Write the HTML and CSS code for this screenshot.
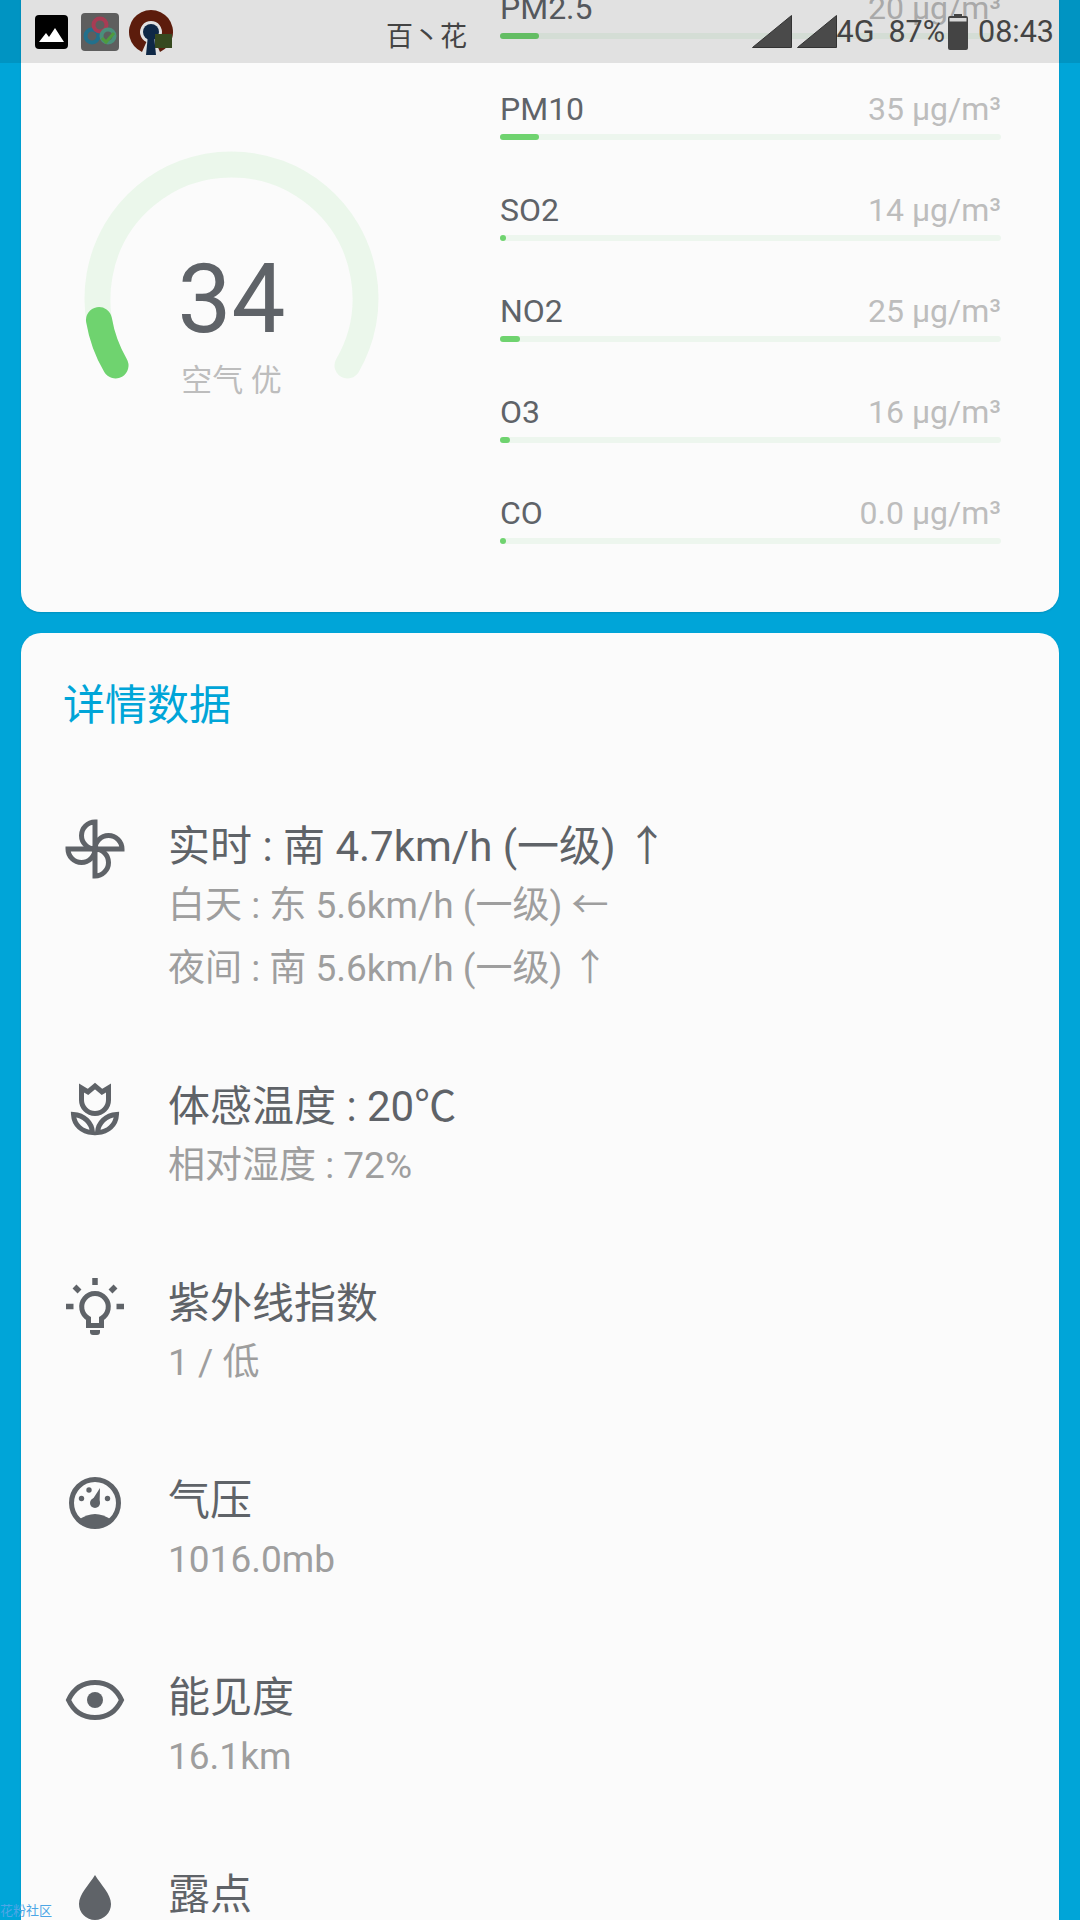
FILE: index.html
```html
<!DOCTYPE html>
<html>

<head>
    <meta charset="utf-8">
    <link rel="stylesheet" href="styles.css">
</head>

<body>
    <div id="statusbar">
        <div class="notify-icons">
            <svg class="ic-image" viewBox="0 0 33 34">
                <rect width="33" height="34" rx="4" fill="#000" />
                <path d="M4 27 L11 18 L14 22 L20 13 L29 27 Z" fill="#fff" />
            </svg>
            <svg class="ic-cloud" viewBox="0 0 38 38">
                <rect width="38" height="38" rx="4" fill="#5e5e5e" />
                <circle cx="11" cy="23" r="6.5" fill="none" stroke="#22708c" stroke-width="4" />
                <circle cx="19" cy="12" r="6.5" fill="none" stroke="#a83c54" stroke-width="4" />
                <circle cx="27" cy="23" r="6.5" fill="none" stroke="#4a8f7c" stroke-width="4" />
                <path d="M21 25 L25 29 L33 20" fill="none" stroke="#4f9a3e" stroke-width="3" />
            </svg>
            <svg class="ic-vpn" viewBox="0 0 46 46">
                <path d="M14 43 A22 22 0 1 1 32 43 L27.6 33 A11 11 0 1 0 18.4 33 Z" fill="#5c1c0c" />
                <circle cx="23" cy="23" r="8" fill="#0e2846" />
                <path d="M20 26 H26 L28 46 H18 Z" fill="#0e2846" />
                <rect x="27" y="25" width="17" height="14" fill="#36491f" />
            </svg>
        </div>
        <div class="carrier">百丶花</div>
        <div class="sys-icons">
            <svg class="ic-signal" viewBox="0 0 40 33">
                <path d="M0.5 32.5 L39.5 0.5 V32.5 Z" fill="#4a4a4a" stroke="#333" />
            </svg>
            <svg class="ic-signal" viewBox="0 0 40 33">
                <path d="M0.5 32.5 L39.5 0.5 V32.5 Z" fill="#4a4a4a" stroke="#333" />
            </svg>
            <span class="net">4G</span>
            <span class="batt-text">87%</span>
            <svg class="ic-batt" viewBox="0 0 20 36">
                <path d="M6 0 H14 V2 H18 Q20 2 20 4 V34 Q20 36 18 36 H2 Q0 36 0 34 V4 Q0 2 2 2 H6 Z" fill="#444" />
                <rect x="1.5" y="4" width="17" height="3.5" fill="#d8d8d8" />
            </svg>
            <span class="clock">08:43</span>
        </div>
    </div>

    <div id="page">
        <div class="card aqi-card">
            <div class="gauge">
                <svg class="gauge-arc" viewBox="0 0 295 295">
                    <!-- 240 degree sweep, r = 134 -->
                    <path d="M31.5 214.5 A134 134 0 1 1 263.5 214.5" fill="none" stroke="#ebf7eb" stroke-width="26"
                        stroke-linecap="round" />
                    <path d="M31.5 214.5 A134 134 0 0 1 15 169" fill="none" stroke="#6fd36f" stroke-width="26"
                        stroke-linecap="round" />
                </svg>
                <div class="gauge-num">34</div>
                <div class="gauge-label">空气 优</div>
            </div>

            <div class="pollutants">
                <div class="poll">
                    <div class="poll-head"><span>PM2.5</span><span class="poll-val">20 μg/m³</span></div>
                    <div class="track"><div class="fill" style="width: 39px"></div></div>
                </div>
                <div class="poll">
                    <div class="poll-head"><span>PM10</span><span class="poll-val">35 μg/m³</span></div>
                    <div class="track"><div class="fill" style="width: 39px"></div></div>
                </div>
                <div class="poll">
                    <div class="poll-head"><span>SO2</span><span class="poll-val">14 μg/m³</span></div>
                    <div class="track"><div class="fill" style="width: 6px"></div></div>
                </div>
                <div class="poll">
                    <div class="poll-head"><span>NO2</span><span class="poll-val">25 μg/m³</span></div>
                    <div class="track"><div class="fill" style="width: 20px"></div></div>
                </div>
                <div class="poll">
                    <div class="poll-head"><span>O3</span><span class="poll-val">16 μg/m³</span></div>
                    <div class="track"><div class="fill" style="width: 10px"></div></div>
                </div>
                <div class="poll">
                    <div class="poll-head"><span>CO</span><span class="poll-val">0.0 μg/m³</span></div>
                    <div class="track"><div class="fill" style="width: 6px"></div></div>
                </div>
            </div>
        </div>

        <div class="card detail-card">
            <div class="detail-title">详情数据</div>

            <div class="detail">
                <svg class="detail-icon" viewBox="0 0 60 60">
                    <g fill="none" stroke="#5f6368" stroke-width="5">
                        <path d="M30 30 V3 A13.5 13.5 0 0 0 30 30 Z" />
                        <path d="M30 30 V3 A13.5 13.5 0 0 0 30 30 Z" transform="rotate(90 30 30)" />
                        <path d="M30 30 V3 A13.5 13.5 0 0 0 30 30 Z" transform="rotate(180 30 30)" />
                        <path d="M30 30 V3 A13.5 13.5 0 0 0 30 30 Z" transform="rotate(270 30 30)" />
                    </g>
                </svg>
                <div class="detail-text">
                    <div class="detail-main">实时 : 南 4.7km/h (一级) ↑</div>
                    <div class="detail-sub">白天 : 东 5.6km/h (一级) ←</div>
                    <div class="detail-sub">夜间 : 南 5.6km/h (一级) ↑</div>
                </div>
            </div>

            <div class="detail">
                <svg class="detail-icon" viewBox="0 0 60 60">
                    <g fill="none" stroke="#5f6368" stroke-width="5">
                        <path d="M16.5 9 V21 A13.5 13.5 0 0 0 43.5 21 V9 L37 13 L30 7 L23 13 Z" />
                        <path d="M8.5 35.5 C19 36 27 44 27.5 53.5 C17 53 9 46 8.5 35.5 Z" />
                        <path d="M51.5 35.5 C41 36 33 44 32.5 53.5 C43 53 51 46 51.5 35.5 Z" />
                    </g>
                </svg>
                <div class="detail-text">
                    <div class="detail-main">体感温度 : 20℃</div>
                    <div class="detail-sub">相对湿度 : 72%</div>
                </div>
            </div>

            <div class="detail">
                <svg class="detail-icon" viewBox="0 0 60 60">
                    <path d="M23.5 42.5 A13.3 13.3 0 1 1 36.5 42.5 V49.5 H23.5 Z" fill="none" stroke="#5f6368"
                        stroke-width="5" />
                    <path d="M25 54 H35 V56 Q35 59 32 59 H28 Q25 59 25 56 Z" fill="#5f6368" />
                    <g stroke="#5f6368" stroke-width="5.5">
                        <path d="M30 2 V9" />
                        <path d="M1 30.5 H8.5" />
                        <path d="M51.5 30.5 H59" />
                        <path d="M9.5 10.5 L14.5 15.5" />
                        <path d="M50.5 10.5 L45.5 15.5" />
                    </g>
                </svg>
                <div class="detail-text">
                    <div class="detail-main">紫外线指数</div>
                    <div class="detail-sub">1 / 低</div>
                </div>
            </div>

            <div class="detail">
                <svg class="detail-icon" viewBox="0 0 60 60">
                    <circle cx="30" cy="30" r="23.5" fill="none" stroke="#5f6368" stroke-width="5" />
                    <path d="M13 47 Q22 41 30 41 Q38 41 47 47 A24 24 0 0 1 13 47 Z" fill="#5f6368" />
                    <circle cx="30" cy="30" r="5" fill="#5f6368" />
                    <path d="M26 29 L35 15 L34.5 31 Z" fill="#5f6368" />
                    <circle cx="16.5" cy="25.5" r="2.7" fill="#5f6368" />
                    <circle cx="24" cy="17" r="2.7" fill="#5f6368" />
                    <circle cx="42.5" cy="25.5" r="2.7" fill="#5f6368" />
                </svg>
                <div class="detail-text">
                    <div class="detail-main">气压</div>
                    <div class="detail-sub">1016.0mb</div>
                </div>
            </div>

            <div class="detail">
                <svg class="detail-icon" viewBox="0 0 60 60">
                    <path d="M3.5 30 C9 18 19 12.5 30 12.5 C41 12.5 51 18 56.5 30 C51 42 41 47.5 30 47.5 C19 47.5 9 42 3.5 30 Z"
                        fill="none" stroke="#5f6368" stroke-width="5" />
                    <circle cx="30" cy="30" r="8" fill="#5f6368" />
                </svg>
                <div class="detail-text">
                    <div class="detail-main">能见度</div>
                    <div class="detail-sub">16.1km</div>
                </div>
            </div>

            <div class="detail">
                <svg class="detail-icon" viewBox="0 0 60 60">
                    <path d="M30 8 C36 18 46 27 46 37 A16 16 0 0 1 14 37 C14 27 24 18 30 8 Z" fill="#5f6368" />
                </svg>
                <div class="detail-text">
                    <div class="detail-main">露点</div>
                </div>
            </div>
        </div>
    </div>

    <div id="watermark">花粉社区</div>
</body>

</html>
```

FILE: styles.css
```css
* {
    box-sizing: border-box;
}

html,
body {
    margin: 0;
    height: 1920px;
    overflow: hidden;
}

body {
    background-color: #00a5d8;
    font-family: Roboto, "Noto Sans CJK SC", sans-serif;
    color: #5f6368;
}

/* status bar sits on top of the scrolled page */
#statusbar {
    position: absolute;
    top: 0;
    left: 0;
    width: 1080px;
    height: 63px;
    background-color: rgba(0, 0, 0, 0.1);
    display: flex;
    align-items: center;
    padding: 0 26px 0 35px;
    color: #444;
    z-index: 2;
}

.notify-icons {
    display: flex;
    align-items: center;
}

.ic-image {
    width: 33px;
    height: 34px;
    margin-top: 1px;
}

.ic-cloud {
    width: 38px;
    height: 38px;
    margin-left: 13px;
}

.ic-vpn {
    width: 46px;
    height: 46px;
    margin-left: 9px;
}

.carrier {
    margin-left: 212px;
    font-size: 27px;
    margin-top: 6px;
    white-space: nowrap;
}

.sys-icons {
    margin-left: auto;
    display: flex;
    align-items: center;
    font-size: 30.5px;
}

.ic-signal {
    width: 40px;
    height: 33px;
    margin-left: 5px;
}

.batt-text {
    margin-left: 14px;
}

.ic-batt {
    width: 20px;
    height: 36px;
    margin-left: 3px;
}

.clock {
    margin-left: 10px;
}

#page {
    display: flex;
    flex-direction: column;
    gap: 21px;
    padding: 0 21px;
}

.card {
    background-color: #fbfbfb;
    border-radius: 20px;
    box-shadow: 0 1px 2px rgba(0, 0, 0, 0.12);
}

.aqi-card {
    margin-top: -40px;
    padding: 28px 58px 18px 63px;
    display: flex;
    align-items: flex-start;
}

.gauge {
    position: relative;
    width: 295px;
    height: 295px;
    margin-top: 163px;
    flex-shrink: 0;
}

.gauge-arc {
    width: 295px;
    height: 295px;
    display: block;
}

.gauge-num {
    position: absolute;
    top: 92px;
    left: 0;
    width: 100%;
    text-align: center;
    font-size: 96px;
    line-height: 112px;
}

.gauge-label {
    position: absolute;
    top: 208px;
    left: 0;
    width: 100%;
    text-align: center;
    font-size: 31px;
    line-height: 44px;
    color: #bdbdbd;
}

.pollutants {
    margin-left: 121px;
    flex: 1;
}

.poll {
    margin-bottom: 50px;
}

.poll-head {
    display: flex;
    justify-content: space-between;
    font-size: 32px;
    line-height: 40px;
}

.poll-val {
    color: #bdbdbd;
}

.track {
    height: 6px;
    margin-top: 5px;
    border-radius: 3px;
    background-color: #edf6ee;
}

.fill {
    height: 6px;
    border-radius: 3px;
    background-color: #6fd36f;
}

.detail-card {
    padding: 45px 44px 0;
}

.detail-title {
    font-size: 42px;
    line-height: 56px;
    color: #00a5d8;
    margin-left: -2px;
    margin-bottom: 85px;
}

.detail {
    display: flex;
    margin-bottom: 79px;
}

.detail-icon {
    width: 60px;
    height: 60px;
    flex-shrink: 0;
}

.detail-text {
    margin-left: 43px;
}

.detail-main {
    font-size: 42px;
    line-height: 55px;
}

.detail-sub {
    font-size: 37px;
    line-height: 63px;
    color: #9e9e9e;
}

#watermark {
    position: absolute;
    left: 0;
    bottom: 1px;
    font-size: 13px;
    line-height: 16px;
    color: #4da6e6;
}
```
